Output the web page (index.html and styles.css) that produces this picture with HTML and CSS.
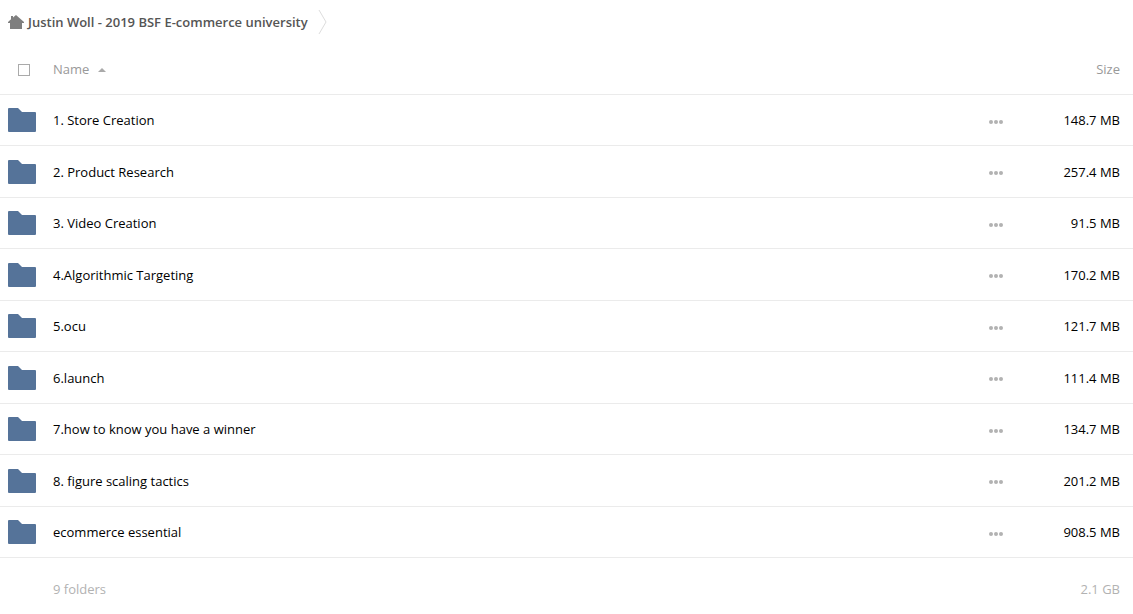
FILE: index.html
```html
<!DOCTYPE html>
<html lang="en">
<head>
    <meta charset="UTF-8">
    <meta name="viewport" content="width=device-width, initial-scale=1.0">
    <title>Justin Woll - 2019 BSF E-commerce university</title>
    <link rel="stylesheet" href="styles.css">
</head>
<body>
    <!-- Shared icons -->
    <svg class="icon-defs" aria-hidden="true">
        <symbol id="icon-folder" viewBox="0 0 28 24">
            <path d="M1 0H10L14 4H27Q28 4 28 5V23Q28 24 27 24H1Q0 24 0 23V1Q0 0 1 0Z"/>
        </symbol>
        <symbol id="icon-more" viewBox="0 0 14 4">
            <circle cx="2" cy="2" r="2"/>
            <circle cx="7" cy="2" r="2"/>
            <circle cx="12" cy="2" r="2"/>
        </symbol>
    </svg>

    <nav class="breadcrumb">
        <a class="crumb" href="#">
            <svg class="home-icon" width="16" height="14" viewBox="0 0 16 14" aria-hidden="true">
                <path d="M8 0L16 7V8H14V14H2V8H0V7L3 4.300V1H5V2.600Z"/>
            </svg>
            <span>Justin Woll - 2019 BSF E-commerce university</span>
        </a>
        <svg class="crumb-arrow" width="9" height="26" viewBox="0 0 9 26" aria-hidden="true">
            <path d="M1 1L8 13L1 25"/>
        </svg>
    </nav>

    <table class="files">
        <thead>
            <tr>
                <th class="col-icon"><input type="checkbox" class="select-all" aria-label="Select all"></th>
                <th class="col-name"><button type="button" class="sort">Name <span class="sort-arrow"></span></button></th>
                <th class="col-actions"></th>
                <th class="col-size"><button type="button" class="sort">Size</button></th>
            </tr>
        </thead>
        <tbody>
            <tr>
                <td class="col-icon"><svg class="folder"><use href="#icon-folder"/></svg></td>
                <td class="col-name"><a href="#">1. Store Creation</a></td>
                <td class="col-actions"><button type="button" class="more" aria-label="More"><svg><use href="#icon-more"/></svg></button></td>
                <td class="col-size">148.7 MB</td>
            </tr>
            <tr>
                <td class="col-icon"><svg class="folder"><use href="#icon-folder"/></svg></td>
                <td class="col-name"><a href="#">2. Product Research</a></td>
                <td class="col-actions"><button type="button" class="more" aria-label="More"><svg><use href="#icon-more"/></svg></button></td>
                <td class="col-size">257.4 MB</td>
            </tr>
            <tr>
                <td class="col-icon"><svg class="folder"><use href="#icon-folder"/></svg></td>
                <td class="col-name"><a href="#">3. Video Creation</a></td>
                <td class="col-actions"><button type="button" class="more" aria-label="More"><svg><use href="#icon-more"/></svg></button></td>
                <td class="col-size">91.5 MB</td>
            </tr>
            <tr>
                <td class="col-icon"><svg class="folder"><use href="#icon-folder"/></svg></td>
                <td class="col-name"><a href="#">4.Algorithmic Targeting</a></td>
                <td class="col-actions"><button type="button" class="more" aria-label="More"><svg><use href="#icon-more"/></svg></button></td>
                <td class="col-size">170.2 MB</td>
            </tr>
            <tr>
                <td class="col-icon"><svg class="folder"><use href="#icon-folder"/></svg></td>
                <td class="col-name"><a href="#">5.ocu</a></td>
                <td class="col-actions"><button type="button" class="more" aria-label="More"><svg><use href="#icon-more"/></svg></button></td>
                <td class="col-size">121.7 MB</td>
            </tr>
            <tr>
                <td class="col-icon"><svg class="folder"><use href="#icon-folder"/></svg></td>
                <td class="col-name"><a href="#">6.launch</a></td>
                <td class="col-actions"><button type="button" class="more" aria-label="More"><svg><use href="#icon-more"/></svg></button></td>
                <td class="col-size">111.4 MB</td>
            </tr>
            <tr>
                <td class="col-icon"><svg class="folder"><use href="#icon-folder"/></svg></td>
                <td class="col-name"><a href="#">7.how to know you have a winner</a></td>
                <td class="col-actions"><button type="button" class="more" aria-label="More"><svg><use href="#icon-more"/></svg></button></td>
                <td class="col-size">134.7 MB</td>
            </tr>
            <tr>
                <td class="col-icon"><svg class="folder"><use href="#icon-folder"/></svg></td>
                <td class="col-name"><a href="#">8. figure scaling tactics</a></td>
                <td class="col-actions"><button type="button" class="more" aria-label="More"><svg><use href="#icon-more"/></svg></button></td>
                <td class="col-size">201.2 MB</td>
            </tr>
            <tr>
                <td class="col-icon"><svg class="folder"><use href="#icon-folder"/></svg></td>
                <td class="col-name"><a href="#">ecommerce essential</a></td>
                <td class="col-actions"><button type="button" class="more" aria-label="More"><svg><use href="#icon-more"/></svg></button></td>
                <td class="col-size">908.5 MB</td>
            </tr>
        </tbody>
        <tfoot>
            <tr>
                <td class="col-icon"></td>
                <td class="col-name">9 folders</td>
                <td class="col-actions"></td>
                <td class="col-size">2.1 GB</td>
            </tr>
        </tfoot>
    </table>
</body>
</html>
```
FILE: styles.css
```css
* {
    box-sizing: border-box;
}

body {
    margin: 0;
    background-color: #fff;
    color: #000;
    font-family: "Open Sans", sans-serif;
    font-size: 13px;
    line-height: 20px;
}

a {
    color: inherit;
    text-decoration: none;
}

button {
    padding: 0;
    border: none;
    background: none;
    color: inherit;
    font: inherit;
    cursor: pointer;
}

.icon-defs {
    display: none;
}

/* Breadcrumb */
.breadcrumb {
    display: flex;
    align-items: center;
    gap: 10px;
    height: 44px;
    padding-left: 8px;
}

.crumb {
    display: flex;
    align-items: center;
    gap: 4px;
    color: #555;
    font-weight: 600;
}

.home-icon {
    fill: #7f7f7f;
}

.crumb-arrow {
    fill: none;
    stroke: #ddd;
}

/* File list */
.files {
    width: 100%;
    border-spacing: 0;
    table-layout: fixed;
}

.files th,
.files td {
    height: 51px;
    padding: 0;
    border-bottom: 1px solid #ebebeb;
    font-weight: 400;
    text-align: left;
    vertical-align: middle;
}

.files tbody tr:nth-child(even) td {
    height: 52px;
}

.files thead {
    color: #999;
}

.files .col-icon {
    width: 53px;
    padding-left: 8px;
}

.files .col-actions {
    width: 24px;
}

.files .col-size {
    width: 125px;
    padding-right: 13px;
    text-align: right;
}

.select-all {
    display: block;
    appearance: none;
    width: 12px;
    height: 12px;
    margin: 2px 0 0 10px;
    border: 1px solid #aaa;
}

.select-all:checked {
    background-color: #aaa;
}

.sort-arrow {
    display: inline-block;
    margin-left: 5px;
    border: 4px solid transparent;
    border-top: none;
    border-bottom-color: #aaa;
    vertical-align: 2px;
}

.folder {
    display: block;
    width: 28px;
    height: 24px;
    fill: #557399;
}

.more {
    display: block;
    padding: 11px 5px 8px;
}

.more svg {
    display: block;
    width: 14px;
    height: 4px;
    fill: #b2b2b2;
}

/* Totals */
.files tfoot td {
    height: 62px;
    border-bottom: none;
    color: #b2b2b2;
}
```
